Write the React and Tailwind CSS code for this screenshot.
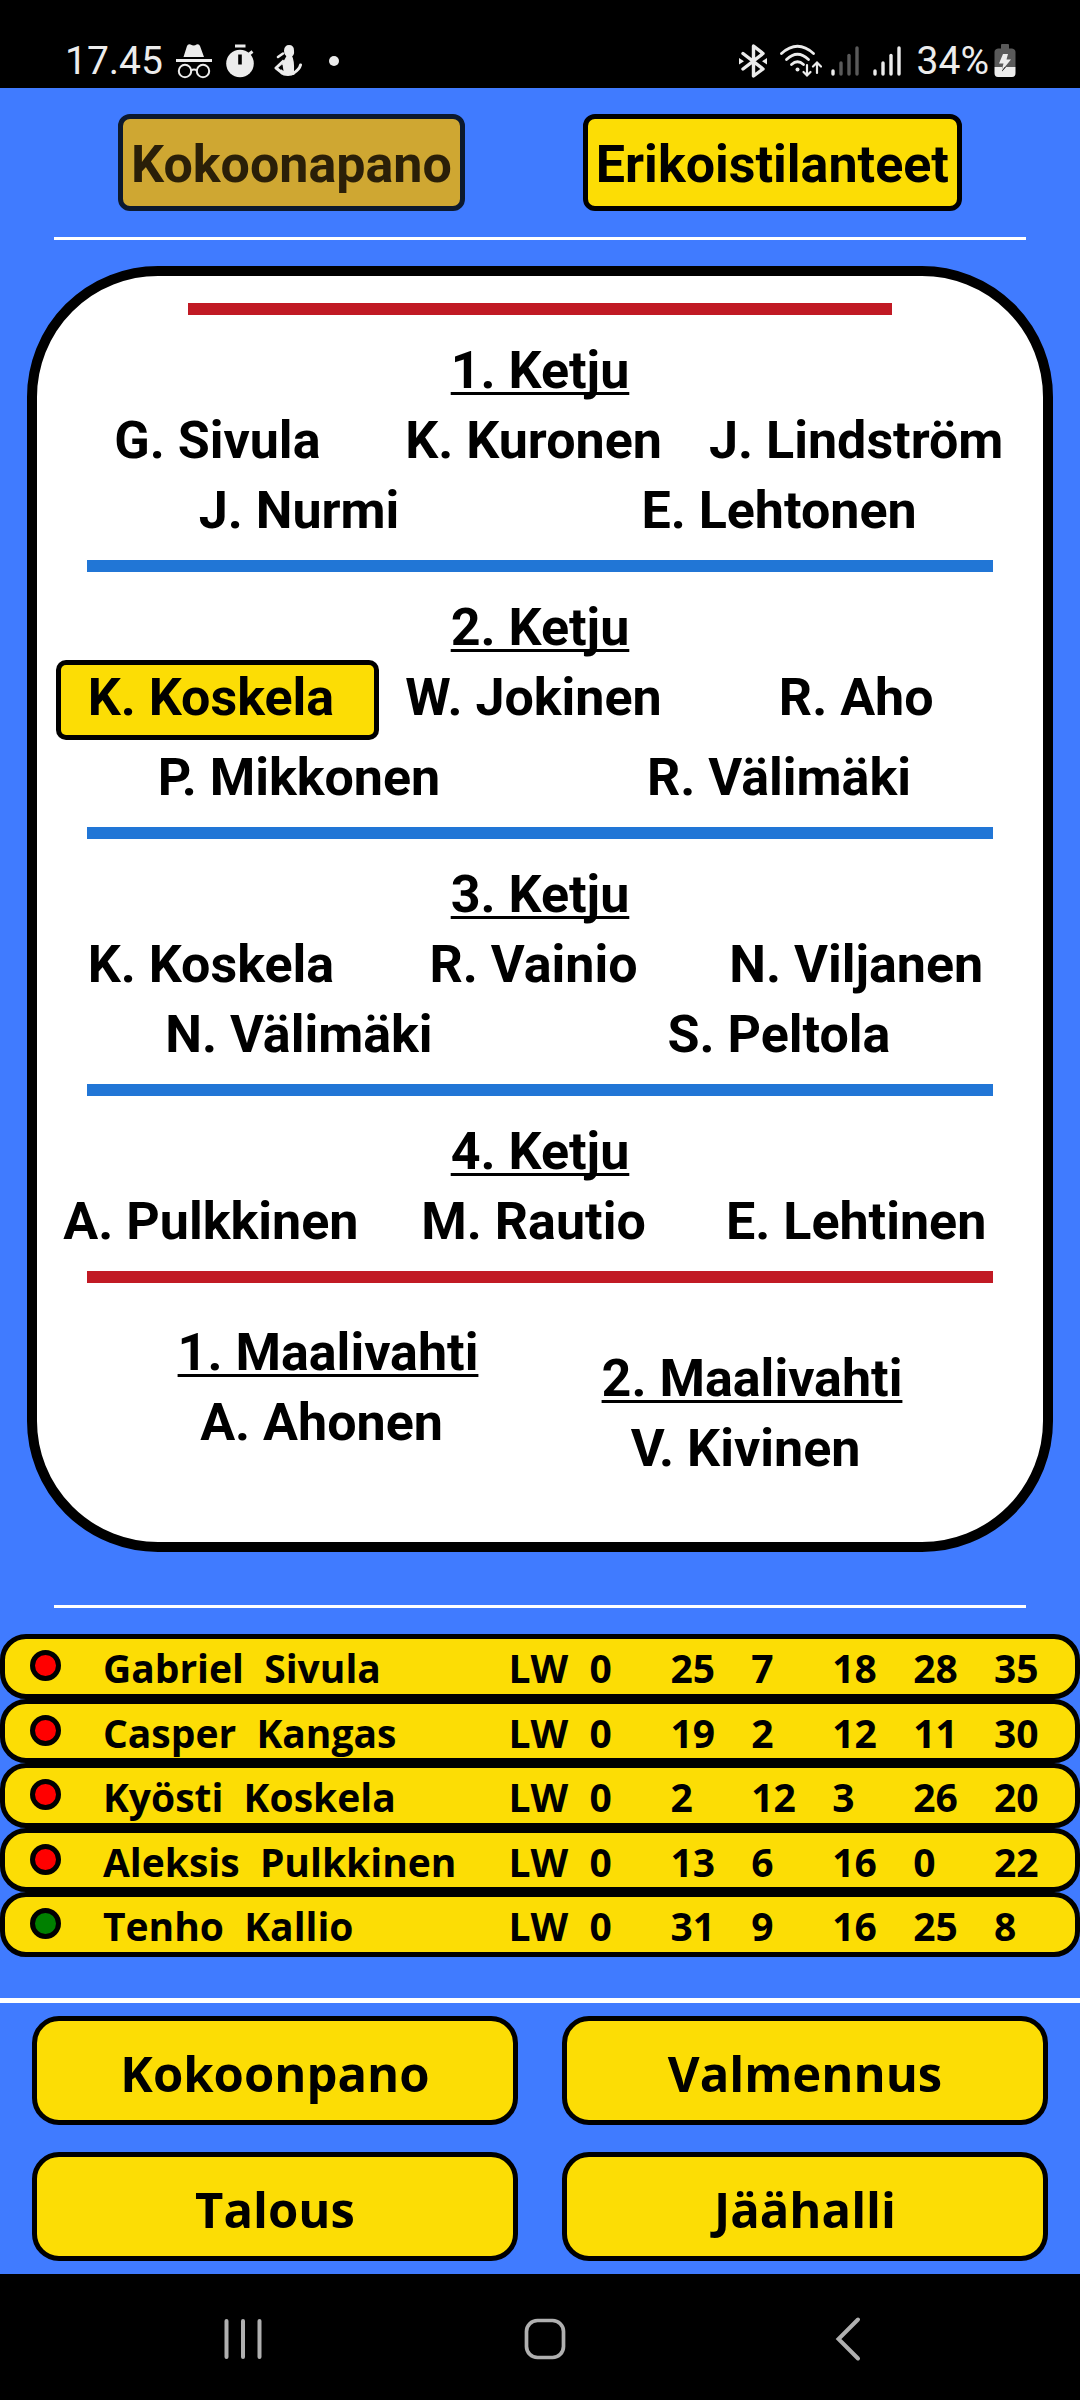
const lines = [
  {
    title: '1. Ketju',
    forwards: ['G. Sivula', 'K. Kuronen ', 'J. Lindström '],
    defence: ['J. Nurmi', 'E. Lehtonen'],
    bar: 'bg-[#2176d6]',
  },
  {
    title: '2. Ketju',
    forwards: ['K. Koskela ', 'W. Jokinen ', 'R. Aho '],
    defence: ['P. Mikkonen', 'R. Välimäki'],
    selected: 0,
    bar: 'bg-[#2176d6]',
  },
  {
    title: '3. Ketju',
    forwards: ['K. Koskela ', 'R. Vainio ', 'N. Viljanen '],
    defence: ['N. Välimäki', 'S. Peltola'],
    bar: 'bg-[#2176d6]',
  },
  {
    title: '4. Ketju',
    forwards: ['A. Pulkkinen ', 'M. Rautio ', 'E. Lehtinen '],
    bar: 'bg-[#c11a24]',
  },
];

const players = [
  { name: 'Gabriel  Sivula', pos: 'LW', stats: [0, 25, 7, 18, 28, 35] },
  { name: 'Casper  Kangas', pos: 'LW', stats: [0, 19, 2, 12, 11, 30] },
  { name: 'Kyösti  Koskela', pos: 'LW', stats: [0, 2, 12, 3, 26, 20] },
  { name: 'Aleksis  Pulkkinen', pos: 'LW', stats: [0, 13, 6, 16, 0, 22] },
  { name: 'Tenho  Kallio', pos: 'LW', stats: [0, 31, 9, 16, 25, 8], free: true },
];

const sections = ['Kokoonpano', 'Valmennus', 'Talous', 'Jäähalli'];

function Incognito() {
  return (
    <svg width="36" height="36" viewBox="0 0 36 36" fill="none" aria-hidden="true">
      <path d="M7.500 14 L11 3 Q12 0.500 14.500 1.500 Q18 3.500 20.500 1.500 Q23 0.500 24 3 L28 14 Z" fill="#ececec" />
      <path d="M0 17.500 H36" stroke="#ececec" strokeWidth="3" />
      <circle cx="9" cy="28" r="6.2" stroke="#ececec" strokeWidth="2" />
      <circle cx="27" cy="28" r="6.2" stroke="#ececec" strokeWidth="2" />
      <path d="M15 27.500 Q18 25.500 21 27.500" stroke="#ececec" strokeWidth="2" />
    </svg>
  );
}

function Stopwatch() {
  return (
    <svg width="28" height="34" viewBox="0 0 28 34" aria-hidden="true">
      <rect x="9" y="0.500" width="10.500" height="3" fill="#ececec" />
      <circle cx="14" cy="19.500" r="13.800" fill="#ececec" />
      <path d="M22 11 L26.500 7.500" stroke="#ececec" strokeWidth="3" />
      <rect x="12.200" y="10.500" width="3.600" height="10" fill="#000" />
    </svg>
  );
}

function Figure() {
  return (
    <svg width="28" height="34" viewBox="0 0 28 34" fill="none" aria-hidden="true">
      <path d="M15 1 Q20 1 20 6.500 Q20.500 11 18 12.500 L13.500 13 Q10 11 10 6.500 Q10.500 1 15 1 Z" fill="#ececec" />
      <path d="M4 13 L9 9.500" stroke="#ececec" strokeWidth="2.600" strokeLinecap="round" />
      <path d="M12.500 12 H18 Q20.500 16 20 27.500 L21 30 Q18 32 14 32 Q9 32 6.500 29.500 L8 20 Z" fill="#ececec" />
      <path d="M10 16.500 L2 24 L9 29.500" stroke="#ececec" strokeWidth="3" strokeLinejoin="round" />
      <path d="M5.500 24 L8.500 20.500 L9.500 27 Z" fill="#000" />
      <path d="M19 29.500 Q25.500 25.500 26.500 21" stroke="#ececec" strokeWidth="3" strokeLinecap="round" />
    </svg>
  );
}

function Bluetooth() {
  return (
    <svg width="28" height="34" viewBox="0 0 28 34" fill="none" aria-hidden="true">
      <path d="M4 9.500 L24 25 L14.500 32 V2 L24 9.500 L4 25" stroke="#ececec" strokeWidth="3.400" strokeLinejoin="round" strokeLinecap="round" />
      <path d="M0 14 L5 17.200 L0 20.500 Z M28 14 L23 17.200 L28 20.500 Z" fill="#ececec" />
    </svg>
  );
}

function Wifi() {
  return (
    <svg width="42" height="34" viewBox="0 0 42 34" fill="none" stroke="#ececec" strokeLinecap="round" aria-hidden="true">
      <path d="M1.500 9.500 Q17.500 -5 33.500 9.500" strokeWidth="2.800" />
      <path d="M6.500 15.500 Q17.500 5 28.500 15.500" strokeWidth="2.800" />
      <path d="M11.500 20.500 Q17.500 15 23.500 20.500" strokeWidth="2.800" />
      <circle cx="17.500" cy="25.500" r="2" fill="#ececec" stroke="none" />
      <path d="M27 21 V31 M23.500 28 L27 31.500 L30.500 28" strokeWidth="2.200" />
      <path d="M37 29 V19 M33 22.500 L37 18.500 L41 22.500" strokeWidth="2.200" />
    </svg>
  );
}

function Signal({ dim }) {
  const rest = dim ? '#5a5a5a' : '#ececec';
  return (
    <svg width="28" height="30" viewBox="0 0 28 30" strokeWidth="3.400" strokeLinecap="round" aria-hidden="true">
      <path d="M2 25 V28" stroke="#ececec" />
      <path d="M10 17 V28" stroke={rest} />
      <path d="M18 9.500 V28" stroke={rest} />
      <path d="M26 2 V28" stroke={rest} />
    </svg>
  );
}

function Battery() {
  return (
    <svg width="22" height="34" viewBox="0 0 22 34" aria-hidden="true">
      <path d="M7 1 Q7 0 8 0 H14 Q15 0 15 1 V4.500 H18 Q21.500 5 21.500 8 V23 H0.500 V8 Q0.500 5 4 4.500 H7 Z" fill="#5a5a5a" />
      <path d="M0.500 23 H21.500 V29 Q21.500 33 18 33 H4 Q0.500 33 0.500 29 Z" fill="#ececec" />
      <path d="M8.500 23 H12 L8 27.500 Z" fill="#000" />
      <path d="M9 10 H14 L12.500 15.500 H17 L7.500 27 L9.500 19.500 H5 Z" fill="#ececec" />
    </svg>
  );
}

function StatusBar() {
  return (
    <header className="flex h-[88px] items-end justify-between bg-black pr-16 pb-[9px] pl-[65px] text-[39px] leading-[36px] text-[#ececec]">
      <div className="flex items-center">
        <span className="mr-[13px]">17.45</span>
        <Incognito />
        <span className="ml-[14px]"><Stopwatch /></span>
        <span className="ml-5"><Figure /></span>
        <span className="ml-[27px] size-[10px] rounded-full bg-[#ececec]" />
      </div>
      <div className="flex items-center">
        <Bluetooth />
        <span className="ml-[13px]"><Wifi /></span>
        <span className="ml-[9px]"><Signal dim /></span>
        <span className="ml-[14px]"><Signal /></span>
        <span className="ml-4">34%</span>
        <span className="ml-[5px]"><Battery /></span>
      </div>
    </header>
  );
}

function Line({ line }) {
  const hasSelection = line.selected !== undefined;
  return (
    <section>
      <h2 className="mt-[23px] h-[70px] text-center leading-[66px] underline decoration-[3px] underline-offset-[4px] [text-decoration-skip-ink:none]">
        {line.title}
      </h2>
      <div className={hasSelection ? 'mb-[10px] grid grid-cols-3 gap-x-[10px] px-6' : 'grid grid-cols-3 px-[19px]'}>
        {line.forwards.map((name, i) => (
          <button
            key={i}
            type="button"
            className={
              i === line.selected
                ? 'h-[70px] rounded-[5px] bg-[#fcdd05] pb-1 leading-[66px] whitespace-pre ring-[5px] ring-black'
                : 'h-[70px] pb-1 leading-[66px] whitespace-pre'
            }
          >
            {name}
          </button>
        ))}
      </div>
      {line.defence && (
        <div className="grid grid-cols-2 pr-6 pl-[22px]">
          {line.defence.map((name) => (
            <button key={name} type="button" className="h-[70px] pb-1 leading-[66px] whitespace-pre">
              {name}
            </button>
          ))}
        </div>
      )}
      <div className={`mx-auto mt-3 h-3 w-[90%] ${line.bar}`} />
    </section>
  );
}

function Goalie({ title, name }) {
  return (
    <div className="text-center">
      <h2 className="h-[70px] leading-[66px] underline decoration-[3px] underline-offset-[4px] [text-decoration-skip-ink:none]">{title}</h2>
      <button type="button" className="block h-[70px] w-full pb-1 leading-[66px] whitespace-pre">{name}</button>
    </div>
  );
}

function PlayerTable() {
  return (
    <table className="mt-[26px] block w-full font-['Open_Sans',sans-serif] text-[39px] leading-[50px] font-bold">
      <tbody className="block">
        {players.map((p) => (
          <tr
            key={p.name}
            className="grid grid-cols-[98fr_406fr_81fr_81fr_81fr_81fr_81fr_81fr_81fr] rounded-[26px] border-[5px] border-black bg-[#fcdd05] odd:h-[65px] even:h-[64px]"
          >
            <td className="pt-[11px] pl-[25px]">
              <span className={`block size-[31px] rounded-full border-[5px] border-black ${p.free ? 'bg-[#008000]' : 'bg-[#ff0000]'}`} />
            </td>
            <td className="pt-1 whitespace-pre">{p.name}</td>
            <td className="pt-1">{p.pos}</td>
            {p.stats.map((s, i) => (
              <td key={i} className="pt-1">{s}</td>
            ))}
          </tr>
        ))}
      </tbody>
    </table>
  );
}

function NavBar() {
  return (
    <nav className="grid h-[126px] grid-cols-3 items-center justify-items-center bg-black pt-1 pr-[81px] pl-[92px]">
      <button type="button" aria-label="Recent apps">
        <svg width="48" height="48" viewBox="0 0 48 48" stroke="#b0b0b0" strokeWidth="4" strokeLinecap="round">
          <path d="M7.500 6 V42 M24 6 V42 M40.500 6 V42" />
        </svg>
      </button>
      <button type="button" aria-label="Home">
        <svg width="48" height="48" viewBox="0 0 48 48" fill="none" stroke="#b0b0b0" strokeWidth="3.700">
          <rect x="5.500" y="5.500" width="37" height="37" rx="11" />
        </svg>
      </button>
      <button type="button" aria-label="Back">
        <svg width="48" height="48" viewBox="0 0 48 48" fill="none" stroke="#b0b0b0" strokeWidth="4" strokeLinecap="round">
          <path d="M34 4.500 L14.500 24 L34 43.500" />
        </svg>
      </button>
    </nav>
  );
}

export default function App() {
  return (
    <div className="flex min-h-screen flex-col bg-[#407bff] font-['Roboto',sans-serif] text-black">
      <StatusBar />
      <main className="flex-1">
        <div className="mt-[26px] flex justify-evenly text-[52px] font-bold">
          <button type="button" disabled className="h-[97px] rounded-xl border-[5px] border-[#0c192e] bg-[#cfa732] px-2 pt-1 text-[#2a1f08]">
            Kokoonapano
          </button>
          <button type="button" className="h-[97px] rounded-xl border-[5px] border-black bg-[#fcdd05] px-2 pt-1">
            Erikoistilanteet
          </button>
        </div>
        <hr className="mx-auto mt-[26px] h-[3px] w-[90%] border-0 bg-white" />
        <div className="mx-auto mt-[26px] w-[95%] rounded-[131px] border-[10px] border-black bg-white pb-[56px] text-[52px] font-bold">
          <div className="mx-auto mt-[27px] h-3 w-[70%] bg-[#c11a24]" />
          {lines.map((line) => (
            <Line key={line.title} line={line} />
          ))}
          <div className="mt-[37px] grid grid-cols-2 px-[79px]">
            <Goalie title="1. Maalivahti" name="A. Ahonen " />
            <div className="mt-[26px]">
              <Goalie title="2. Maalivahti" name="V. Kivinen " />
            </div>
          </div>
        </div>
        <hr className="mx-auto mt-[53px] h-[3px] w-[90%] border-0 bg-white" />
        <PlayerTable />
      </main>
      <div className="grid grid-cols-2 gap-x-11 gap-y-[27px] border-t-[5px] border-white px-8 pt-[13px] pb-[13px]">
        {sections.map((s) => (
          <button
            key={s}
            type="button"
            className="h-[109px] rounded-[27px] border-[5px] border-black bg-[#fcdd05] pt-[6px] font-['Open_Sans',sans-serif] text-[49px] font-bold"
          >
            {s}
          </button>
        ))}
      </div>
      <NavBar />
    </div>
  );
}
